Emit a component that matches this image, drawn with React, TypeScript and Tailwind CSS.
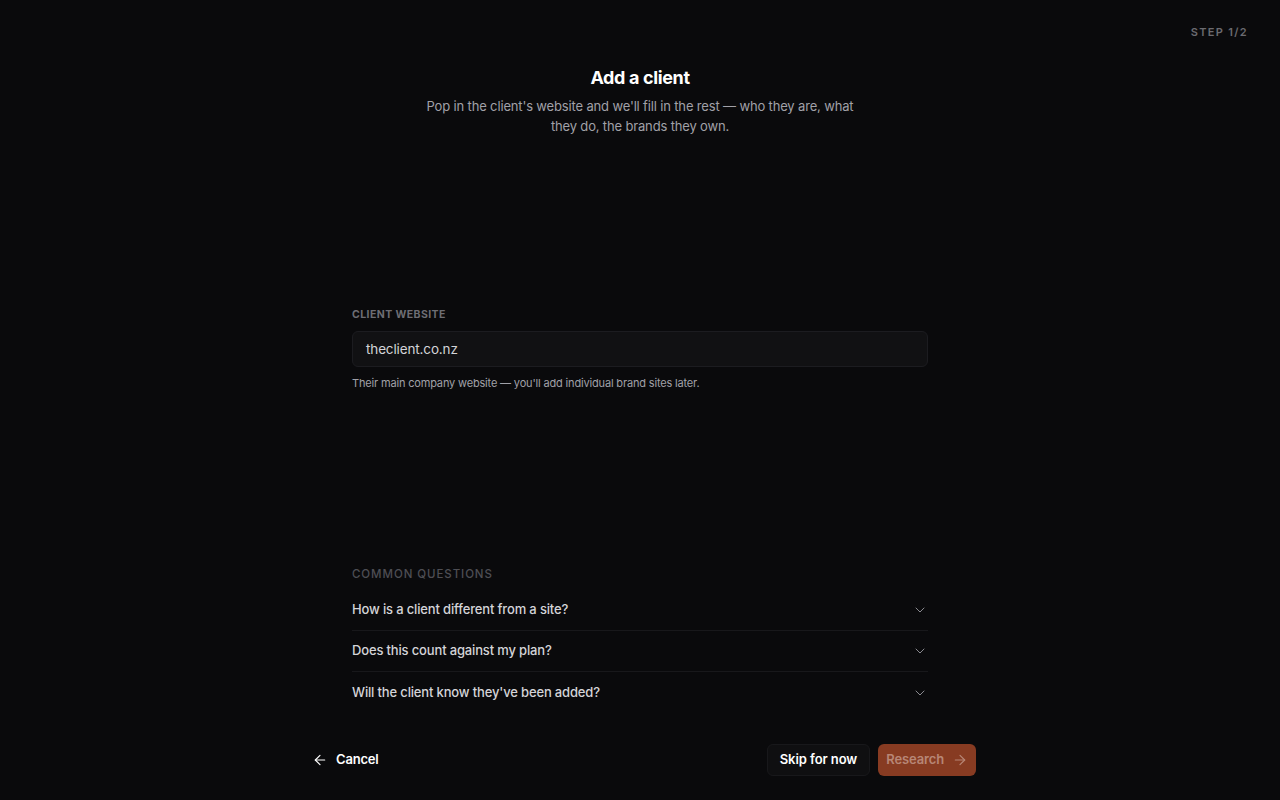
import { ArrowLeft, ArrowRight, ChevronDown } from "lucide-react";

const questions = [
  "How is a client different from a site?",
  "Does this count against my plan?",
  "Will the client know they've been added?",
];

export default function App() {
  return (
    <div
      className="relative h-screen flex flex-col bg-[#0a0a0c] text-white"
      style={{ fontFamily: "Inter, 'Noto Sans', sans-serif" }}
    >
      {/* step indicator */}
      <div className="absolute top-6 right-8 text-[11px] font-semibold tracking-[0.12em] text-[#6b6b70] leading-4">
        STEP 1/2
      </div>

      {/* header */}
      <div className="pt-16 text-center">
        <h1 className="text-[18px] leading-7 font-bold tracking-[-0.02em] text-white">Add a client</h1>
        <p className="mx-auto mt-1 max-w-[440px] text-[13px] leading-5 tracking-[-0.012em] text-[#a1a1a8]">
          Pop in the client's website and we'll fill in the rest — who they are, what they do, the brands they own.
        </p>
      </div>

      {/* form */}
      <div className="flex-1 flex items-center justify-center pb-1">
        <div className="w-[576px]">
          <label className="block mb-2 text-[10.5px] leading-4 font-bold tracking-[0.04em] text-[#6e6e74]">
            CLIENT WEBSITE
          </label>
          <div className="h-9 flex items-center rounded-md border border-[#1c1c20] bg-[#111113] px-[13px] text-[13.5px] tracking-[-0.01em] text-[#d4d4d8]">
            theclient.co.nz
          </div>
          <p className="mt-2 text-[11px] leading-4 tracking-[-0.015em] text-[#a1a1a8]">
            Their main company website — you'll add individual brand sites later.
          </p>
        </div>
      </div>

      {/* faq */}
      <div className="w-[576px] mx-auto">
        <div className="mb-2 text-[11.5px] leading-4 font-medium tracking-[0.08em] text-[#4e4e54]">
          COMMON QUESTIONS
        </div>
        <div>
          {questions.map((q, i) => (
            <div
              key={q}
              className={`h-[41px] flex items-center justify-between ${i < questions.length - 1 ? "border-b border-[#18181b]" : ""}`}
            >
              <span className="text-[13px] font-medium tracking-[-0.012em] text-[#d4d4d8]">{q}</span>
              <ChevronDown className="w-4 h-4 text-[#8a8a90]" strokeWidth={1.5} />
            </div>
          ))}
        </div>
      </div>

      {/* footer */}
      <div className="w-[672px] mx-auto pt-[31px] pb-6 flex items-center justify-between">
        <button className="h-8 px-2 flex items-center gap-2 text-[13px] font-semibold tracking-[-0.015em] text-white">
          <ArrowLeft className="w-4 h-4" strokeWidth={1.75} />
          Cancel
        </button>
        <div className="flex items-center gap-2">
          <button className="h-8 px-3 rounded-md border border-[#18181b] bg-[#0f0f11] text-[13px] font-semibold tracking-[-0.005em] text-white">
            Skip for now
          </button>
          <button className="h-8 px-2 flex items-center gap-2 rounded-md bg-[#873b22] text-[13px] font-semibold tracking-[-0.01em] text-[#b78676]">
            Research
            <ArrowRight className="w-4 h-4" strokeWidth={1.75} />
          </button>
        </div>
      </div>
    </div>
  );
}
